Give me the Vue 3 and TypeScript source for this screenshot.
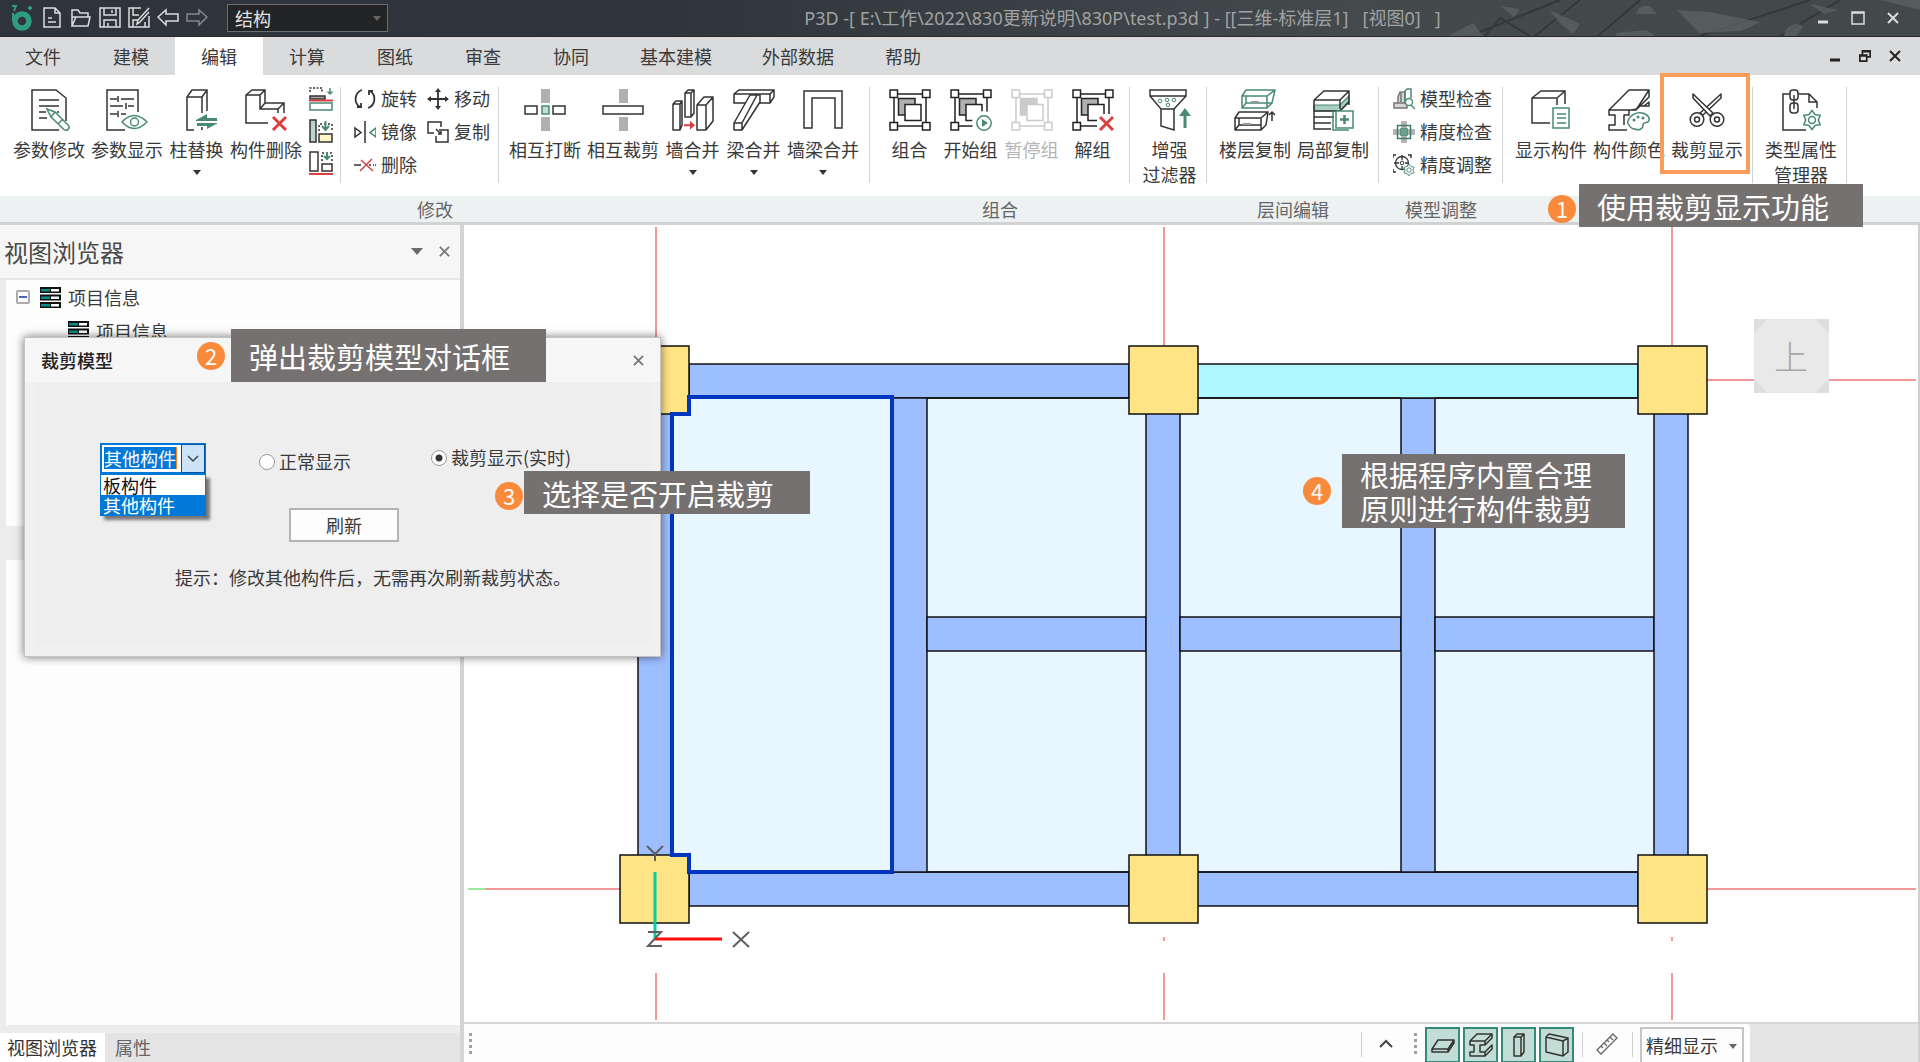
<script setup lang="ts">
import { ref } from 'vue'

interface Tool {
  icon: string
  label: string
  second?: string
  drop?: boolean
  disabled?: boolean
  marked?: boolean
}

interface Callout {
  id: number
  lines: string[]
}

const menus: string[] = ['文件', '建模', '编辑', '计算', '图纸', '审查', '协同', '基本建模', '外部数据', '帮助']
const activeMenu = ref('编辑')

const quick: { icon: string; title: string }[] = [
  { icon: 'new', title: '新建' },
  { icon: 'open', title: '打开' },
  { icon: 'save', title: '保存' },
  { icon: 'save-as', title: '另存为' },
  { icon: 'undo', title: '撤销' },
  { icon: 'redo', title: '重做' },
]

const memberTools: Tool[] = [
  { icon: 'param-edit', label: '参数修改' },
  { icon: 'param-show', label: '参数显示' },
  { icon: 'col-swap', label: '柱替换', drop: true },
  { icon: 'member-del', label: '构件删除' },
]
const alignTools: { icon: string; title: string }[] = [
  { icon: 'align-top', title: '顶对齐' },
  { icon: 'align-side', title: '侧对齐' },
  { icon: 'align-base', title: '底对齐' },
]
const moveTools: Tool[] = [
  { icon: 'rotate', label: '旋转' },
  { icon: 'move', label: '移动' },
  { icon: 'mirror', label: '镜像' },
  { icon: 'copy', label: '复制' },
  { icon: 'erase', label: '删除' },
]
const mergeTools: Tool[] = [
  { icon: 'break', label: '相互打断' },
  { icon: 'trim', label: '相互裁剪' },
  { icon: 'wall-merge', label: '墙合并', drop: true },
  { icon: 'beam-merge', label: '梁合并', drop: true },
  { icon: 'wb-merge', label: '墙梁合并', drop: true },
]
const groupTools: Tool[] = [
  { icon: 'group', label: '组合' },
  { icon: 'group-start', label: '开始组' },
  { icon: 'group-pause', label: '暂停组', disabled: true },
  { icon: 'ungroup', label: '解组' },
]
const filterTools: Tool[] = [{ icon: 'filter', label: '增强', second: '过滤器' }]
const floorTools: Tool[] = [
  { icon: 'floor-copy', label: '楼层复制' },
  { icon: 'part-copy', label: '局部复制' },
]
const checkTools: Tool[] = [
  { icon: 'model-check', label: '模型检查' },
  { icon: 'precision-check', label: '精度检查' },
  { icon: 'precision-set', label: '精度调整' },
]
const showTools: Tool[] = [
  { icon: 'member-show', label: '显示构件' },
  { icon: 'member-color', label: '构件颜色' },
  { icon: 'scissors', label: '裁剪显示', marked: true },
]
const typeTools: Tool[] = [{ icon: 'type-mgr', label: '类型属性', second: '管理器' }]

const bigGroups: { name: string; tools: Tool[] }[] = [
  { name: '组合', tools: groupTools },
  { name: '', tools: filterTools },
  { name: '层间编辑', tools: floorTools },
]
const lastGroups: { name: string; tools: Tool[] }[] = [
  { name: '', tools: showTools },
  { name: '', tools: typeTools },
]

const memberTypes: string[] = ['板构件', '其他构件']
const memberType = ref('其他构件')
const displayMode = ref('clip')

const callouts: Callout[] = [
  { id: 1, lines: ['使用裁剪显示功能'] },
  { id: 2, lines: ['弹出裁剪模型对话框'] },
  { id: 3, lines: ['选择是否开启裁剪'] },
  { id: 4, lines: ['根据程序内置合理', '原则进行构件裁剪'] },
]

const columns: [number, number][] = [
  [620, 346], [1129, 346], [1638, 346],
  [620, 855], [1129, 855], [1638, 855],
]

const viewToggles: { icon: string; title: string }[] = [
  { icon: 'v-slab', title: '板' },
  { icon: 'v-beam', title: '梁' },
  { icon: 'v-column', title: '柱' },
  { icon: 'v-wall', title: '墙' },
]
</script>

<template>
  <div class="app">
    <svg class="defs" aria-hidden="true">
      <defs>
        <g id="sq-frame" fill="none" stroke-width="1.5">
          <path d="M9 5h24M9 37h24M5 9v24M37 9v24" />
          <path d="M9.500 9.500h16.500v16.500H9.500z" fill="#b0b0b0" />
          <path d="M16 15.500h16v16H16z" fill="#fff" />
          <path d="M1 1h7.500v7.500H1zM33.500 1H41v7.500h-7.500zM1 33.500h7.500V41H1zM33.500 33.500H41V41h-7.500z" fill="#fff" />
        </g>
        <g id="gear" fill="#fff" stroke="#4a8a73" stroke-width="1.500">
          <path d="M0-9.500 3-5.500 8.200-4.700 6.300 0 8.200 4.700 3 5.500 0 9.500-3 5.500-8.200 4.700-6.300 0-8.200-4.700-3-5.500z" />
          <circle r="3.500" />
        </g>
      </defs>
      <symbol id="i-logo" viewBox="0 0 22 26"><circle cx="11" cy="16" r="7" fill="none" stroke="#2f9c82" stroke-width="5.500" /><path d="M2 8v8M17 3h4M19 1v4M1 1h4L3 6" stroke="#2f9c82" stroke-width="2" fill="none" /></symbol>
      <symbol id="i-new" viewBox="0 0 22 22"><path d="M3 1h11l5 5v14H3zM14 1v5h5M7 11h4M7 15h8" fill="none" stroke="#dcdcdc" stroke-width="1.500" /></symbol>
      <symbol id="i-open" viewBox="0 0 22 22"><path d="M2 19V3h6l2 3h8v4M2 19l4-9h14l-2 9zM2 10h4" fill="none" stroke="#dcdcdc" stroke-width="1.500" /></symbol>
      <symbol id="i-save" viewBox="0 0 22 22"><path d="M1 1h20v19H1zM5 1v7h12V1M13 3v3M5 20v-7h12v7M9 16v4" fill="none" stroke="#dcdcdc" stroke-width="1.500" /></symbol>
      <symbol id="i-save-as" viewBox="0 0 22 22"><path d="M13 1H1v19h20V9M5 1v7h6M5 20v-7h5M17 20v-5M21 1 10 13l-1 4 3-2L21 5" fill="none" stroke="#dcdcdc" stroke-width="1.500" /></symbol>
      <symbol id="i-undo" viewBox="0 0 22 22"><path d="M1 10 9 3v4h12v7H9v4z" fill="none" stroke="#dcdcdc" stroke-width="1.500" /></symbol>
      <symbol id="i-redo" viewBox="0 0 22 22"><path d="M21 10 13 3v4H1v7h12v4z" fill="none" stroke="#85888a" stroke-width="1.500" /></symbol>

      <symbol id="i-param-edit" viewBox="0 0 42 42"><g fill="none" stroke="#333" stroke-width="1.500"><path d="M31 41H4V1h24l10 8v23" /><path d="M11 11h20M11 17h20M11 23h7M11 29h8M29 23h2" /></g><path d="m19 20 8 3 13 13a3 3 0 0 1-4 4.500L23 28zM27 23l-4 5M34 31l-4 4" fill="#fff" stroke="#4a8a73" stroke-width="1.500" /></symbol>
      <symbol id="i-param-show" viewBox="0 0 42 42"><path d="M19 41H1V1h31v22M4 10h7M15 10h13M12 7v6M4 17h13M22 17h6M20 14v6M4 25h7M15 25h5M12 22v6" fill="none" stroke="#333" stroke-width="1.500" /><path d="M16 33q12-13 25 0q-13 13-25 0z" fill="#fff" stroke="#4a8a73" stroke-width="1.500" /><circle cx="28.500" cy="33" r="4" fill="none" stroke="#4a8a73" stroke-width="1.500" /></symbol>
      <symbol id="i-col-swap" viewBox="0 0 42 42"><path d="M18 41h-7V8L16 1h15v21M11 8h15v16M26 8l5-7M26 41v-3" fill="none" stroke="#333" stroke-width="1.500" /><path d="M20 31 31 25v4h10v3H20zM42 34 31 40v-3H21v-3z" fill="#4a8a73" /></symbol>
      <symbol id="i-member-del" viewBox="0 0 42 42"><path d="M23 34H1V6L7 1h13v13h19v10M1 6h14v14h18v4M15 6l5-5M15 20l5-6M33 20l6-6" fill="none" stroke="#333" stroke-width="1.500" /><path d="m28 28 13 13M41 28 28 41" stroke="#d9403f" stroke-width="3" /></symbol>
      <symbol id="i-align-top" viewBox="0 0 24 24"><path d="M1 5V1h12v4" fill="none" stroke="#333" stroke-width="1.500" stroke-dasharray="2 1.500" /><path d="M1 9h15v3H1z" fill="#aaa" stroke="#333" stroke-width="1.500" /><path d="M0 13.500h24" stroke="#d9403f" stroke-width="2" /><path d="M1 16h22v7H1z" fill="#fff" stroke="#4a8a73" stroke-width="1.500" /><path d="M21 1v6M18.500 4.500 21 7l2.500-2.500" fill="none" stroke="#4a8a73" stroke-width="1.500" /></symbol>
      <symbol id="i-align-side" viewBox="0 0 24 24"><path d="M1 1h6v22H1z" fill="#b9d6cb" stroke="#333" stroke-width="1.500" /><path d="M10 15h13v8H10z" fill="#fff6c8" stroke="#333" stroke-width="1.500" /><path d="M10 12V5h13v7" fill="none" stroke="#333" stroke-width="1.500" stroke-dasharray="2 2" /><path d="M16.500 2v8M13 7l3.500 4L20 7" fill="none" stroke="#4a8a73" stroke-width="2" /></symbol>
      <symbol id="i-align-base" viewBox="0 0 24 24"><path d="M1 1h8v19H1zM13 13h10v7H13z" fill="#fff" stroke="#333" stroke-width="1.500" /><path d="M13 10V2h10v8" fill="none" stroke="#333" stroke-width="1.500" stroke-dasharray="2 2" /><path d="M18 1v6M15 5l3 3 3-3" fill="none" stroke="#4a8a73" stroke-width="2" /><path d="M0 23h24" stroke="#d9403f" stroke-width="2" /></symbol>

      <symbol id="i-rotate" viewBox="0 0 22 22"><path d="M8 2a9.500 9.500 0 0 0-2 17M14 20a9.500 9.500 0 0 0 2-17M3 19h4v-4M19 3h-4v4" fill="none" stroke="#333" stroke-width="1.800" /></symbol>
      <symbol id="i-move" viewBox="0 0 22 22"><path d="M11 2v18M2 11h18" stroke="#333" stroke-width="1.800" /><path d="m11 0 3 4H8zM11 22l3-4H8zM0 11l4-3v6zM22 11l-4-3v6z" fill="#333" /></symbol>
      <symbol id="i-mirror" viewBox="0 0 22 22"><path d="M1 7v9l6-4.500zM11 0v22" fill="none" stroke="#333" stroke-width="1.500" /><path d="M22 7v9l-6-4.500z" fill="none" stroke="#4a8a73" stroke-width="1.500" /></symbol>
      <symbol id="i-copy" viewBox="0 0 22 22"><path d="M7 12H1V1h13v5M12 9h9v12H9v-6M9 8l5 5M14 10v3h-3" fill="none" stroke="#333" stroke-width="1.500" /></symbol>
      <symbol id="i-erase" viewBox="0 0 22 22"><path d="M0 11h7M15 11h2M19 11h1M21 11h1" stroke="#333" stroke-width="1.500" /><path d="m7 6 12 11M18 5 6 17" stroke="#d9403f" stroke-width="1.500" /></symbol>

      <symbol id="i-break" viewBox="0 0 42 42"><path d="M17 0h9v14h-9zM17 28h9v14h-9z" fill="#b0b0b0" /><path d="M1 17h12v8H1zM29 17h12v8H29z" fill="#fff" stroke="#333" stroke-width="1.500" /><path d="M18 17h7v8h-7z" fill="#c5ded5" stroke="#4a8a73" stroke-width="1.500" /></symbol>
      <symbol id="i-trim" viewBox="0 0 42 42"><path d="M17 0h9v14h-9zM17 28h9v14h-9z" fill="#b0b0b0" /><path d="M1 17h40v8H1z" fill="#fff" stroke="#333" stroke-width="1.500" /></symbol>
      <symbol id="i-wall-merge" viewBox="0 0 42 42"><path d="M1 15h7v26H1zM1 15l3-3h6v24l-2 5M8 15l2-3M13 4h6v24h-6zM13 4l3-3h6v23l-3 4M19 4l3-3M25 16h9v25h-9zM25 16l7-8h9v24l-7 9M34 16l7-8" fill="#fff" stroke="#333" stroke-width="1.500" stroke-linejoin="round" /><path d="M12 35.200h6v-3.500l5 4.500-5 4.500v-3.500h-6z" fill="#d9403f" /></symbol>
      <symbol id="i-beam-merge" viewBox="0 0 42 42"><path d="M1 5 6 1h35v7l-4 6H1zM1 5h36v9M37 5l4-4" fill="#fff" stroke="#333" stroke-width="1.500" /><path d="M1 34 17 6h7L9 34zM1 34h8v7H1zM9 41 27 13V6h-3L9 34" fill="#fff" stroke="#333" stroke-width="1.500" stroke-linejoin="round" /></symbol>
      <symbol id="i-wb-merge" viewBox="0 0 42 42"><path d="M2 2h38v37h-7V9H10v30H2z" fill="#fff" stroke="#333" stroke-width="1.500" /></symbol>
      <symbol id="i-group" viewBox="0 0 42 42"><use href="#sq-frame" stroke="#222" /></symbol>
      <symbol id="i-group-start" viewBox="0 0 42 42"><use href="#sq-frame" stroke="#222" /><circle cx="34" cy="34" r="12" fill="#fff" /><circle cx="34" cy="34" r="7.200" fill="none" stroke="#4a8a73" stroke-width="1.500" /><path d="m32 30 6 4-6 4z" fill="#4a8a73" /></symbol>
      <symbol id="i-group-pause" viewBox="0 0 42 42"><g opacity=".65"><use href="#sq-frame" stroke="#b0b0b0" /></g></symbol>
      <symbol id="i-ungroup" viewBox="0 0 42 42"><use href="#sq-frame" stroke="#222" /><path d="M25 25h17v17H25z" fill="#fff" /><path d="m28 28 13 13M41 28 28 41" stroke="#d9403f" stroke-width="3" /></symbol>
      <symbol id="i-filter" viewBox="0 0 42 42"><path d="M1 1h36v6L25 20v21l-13-4V20L1 7zM1 7h36M12 20h13" fill="#fff" stroke="#333" stroke-width="1.500" /><g fill="none" stroke="#4a8a73"><circle cx="11" cy="12" r="1.800" /><circle cx="18" cy="11" r="1.800" /><circle cx="25" cy="11" r="1.800" /><circle cx="19" cy="16" r="1.800" /></g><path d="M36 19l6 8h-4.500v12h-3V27H30z" fill="#4a8a73" /></symbol>
      <symbol id="i-floor-copy" viewBox="0 0 42 42"><path d="M8 7 12 1h29l-3 13-5 5H8zM8 7h25v12M33 7l8-6M12 7v7l-4 5M12 14h26" fill="#fff" stroke="#4a8a73" stroke-width="1.500" stroke-linejoin="round" /><path d="M1 29 5 23h29l-2 13-5 5H1zM1 29h26v12M27 29l7-6M5 29v7l-4 5M5 36h22" fill="#fff" stroke="#333" stroke-width="1.500" stroke-linejoin="round" /><path d="M17 13h8M9 35h8" stroke="#999" stroke-width="2" /><path d="M38 32V23M35 26l3-3 3 3" fill="none" stroke="#333" stroke-width="1.500" /></symbol>
      <symbol id="i-part-copy" viewBox="0 0 42 42"><path d="M2 16h26l9-9v5l-9 10H2z" fill="#a9cdbf" stroke="#4a8a73" stroke-width="1.200" /><path d="M2 11 12 2h25v14M2 11h26l9-9M2 11v29h17M2 22h26l9-9M2 28h20M2 34h17M28 11v9" fill="none" stroke="#333" stroke-width="1.500" /><path d="M21 22v19h16" fill="none" stroke="#4a8a73" stroke-width="1.500" /><path d="M24 22h17v17H24z" fill="#fff" stroke="#4a8a73" stroke-width="1.500" /><path d="M32.500 26v9M28 30.500h9" stroke="#4a8a73" stroke-width="2.500" /></symbol>
      <symbol id="i-model-check" viewBox="0 0 22 22"><path d="M1 15h4V9l2-5h5v11l2 2v3H1zM5 15h8M8 5v9" fill="#d5d5d5" stroke="#777" stroke-width="1.500" /><path d="M12 15V3l2-2h4v9" fill="none" stroke="#4a8a73" stroke-width="1.500" /><circle cx="16" cy="14" r="3.500" fill="#fff" stroke="#4a8a73" stroke-width="1.300" /><path d="m18 17 4 4" stroke="#4a8a73" stroke-width="1.500" /></symbol>
      <symbol id="i-precision-check" viewBox="0 0 22 22"><path d="M8 0h6v22H8zM0 8h22v6H0z" fill="#b4b4b4" /><path d="M4.500 4.500h13v13h-13zM8 8h6v6H8z" fill="none" stroke="#3f806a" stroke-width="1.500" /><path d="M8 8h6v6H8z" fill="#6ba08e" /></symbol>
      <symbol id="i-precision-set" viewBox="0 0 22 22"><path d="M0 4V1h3M15 1h3v3M0 15v3h3" fill="none" stroke="#333" stroke-width="1.500" /><circle cx="9" cy="9" r="6.500" fill="none" stroke="#333" stroke-width="1.300" /><circle cx="9" cy="9" r="1.800" fill="none" stroke="#333" /><path d="M9 1v5M9 12v4M1 9h5M12 9h4" stroke="#333" stroke-width="1.300" /><use href="#gear" transform="translate(16 16) scale(.62)" /></symbol>
      <symbol id="i-member-show" viewBox="0 0 42 42"><path d="M20 34H2V9l9-7h24v13M2 9h25v7M27 9l8-7" fill="none" stroke="#333" stroke-width="1.500" /><path d="M23 19h16v20H23z" fill="#fff" stroke="#4a8a73" stroke-width="1.500" /><path d="M27 25h9M27 29h9M27 34h9" stroke="#4a8a73" stroke-width="1.500" /></symbol>
      <symbol id="i-member-color" viewBox="0 0 42 42"><path d="M19 41H1v-5h6V26H1v-5L21 1h20v7L29 20l-6 1M1 21h27L41 1M21 21v5h-5v10M33 17h8v-4l-5 4" fill="none" stroke="#333" stroke-width="1.500" stroke-linejoin="round" /><path d="M20 32c2-6 8-9 14-8s9 6 6 9c-2 1-5 0-5 3 0 4-4 6-8 4-3 0-5-2-6-4-1-1-2-2-1-4z" fill="#fff" stroke="#4a8a73" stroke-width="1.500" /><g fill="#4a8a73"><circle cx="26" cy="31" r="1.500" /><circle cx="30" cy="28" r="1.500" /><circle cx="35" cy="29" r="1.500" /></g></symbol>
      <symbol id="i-scissors" viewBox="0 0 42 42"><g fill="#fff" stroke="#333" stroke-width="1.500" stroke-linejoin="round"><path d="M35 5v4L17 26l-3-2z" /><path d="M7 5v4l17 18 3-3z" /><circle cx="11" cy="30.500" r="6.800" /><circle cx="31" cy="30.500" r="6.800" /><circle cx="11" cy="30.500" r="2.500" /><circle cx="31" cy="30.500" r="2.500" /></g></symbol>
      <symbol id="i-type-mgr" viewBox="0 0 42 42"><path d="M26 41H3V5h7M18 5h11l8 8v6M29 5v8h8" fill="none" stroke="#333" stroke-width="1.500" /><rect x="10" y="1" width="8" height="10" rx="3" fill="none" stroke="#333" stroke-width="1.500" /><rect x="10" y="14" width="8" height="10" rx="3" fill="none" stroke="#333" stroke-width="1.500" /><path d="M14 6v14" stroke="#333" stroke-width="1.500" /><use href="#gear" transform="translate(32 31)" /></symbol>

      <symbol id="i-tree" viewBox="0 0 21 21"><path d="M0 0h21v6H0zM0 7.500h21v6H0zM0 15h21v6H0z" fill="#111" /><path d="M1 2h9v2.500H1zM1 9.500h9V12H1zM1 17h9v2.500H1z" fill="#00908a" /><path d="M11 2h8v2.500h-8zM11 9.500h8V12h-8zM11 17h8v2.500h-8z" fill="#fff" /></symbol>
      <symbol id="i-v-slab" viewBox="0 0 26 26"><path d="M2 17 8 8h16l-6 9zM2 17v3h16l6-9V8M18 17v3" fill="none" stroke="#333" stroke-width="1.500" stroke-linejoin="round" /></symbol>
      <symbol id="i-v-beam" viewBox="0 0 26 26"><path d="M2 9 9 2h15l-7 7zM2 9v4h4v7H2v4h15l7-7v-4l-7 7h-5v-7h5l7-7V2M17 9v4M17 20v4" fill="none" stroke="#333" stroke-width="1.500" stroke-linejoin="round" /></symbol>
      <symbol id="i-v-column" viewBox="0 0 26 26"><path d="M8 5h7v19H8zM8 5l3-3h7v18l-3 4M15 5l3-3" fill="none" stroke="#333" stroke-width="1.500" stroke-linejoin="round" /></symbol>
      <symbol id="i-v-wall" viewBox="0 0 26 26"><path d="M2 5l17 4v15L2 20zM2 5l3-3 19 4v14l-5 4M19 9l5-3" fill="none" stroke="#333" stroke-width="1.500" stroke-linejoin="round" /></symbol>
      <symbol id="i-ruler" viewBox="0 0 24 24"><path d="M2 18 18 2l4 4L6 22zM6 14l2 2M9 11l3 3M12 8l2 2M15 5l3 3" fill="none" stroke="#666" stroke-width="1.300" /></symbol>
      <symbol id="i-x" viewBox="0 0 12 12"><path d="m1 1 10 10M11 1 1 11" fill="none" stroke="currentColor" stroke-width="2" /></symbol>
      <symbol id="i-min" viewBox="0 0 12 12"><path d="M1 10h10" stroke="currentColor" stroke-width="3" /></symbol>
      <symbol id="i-max" viewBox="0 0 14 14"><path d="M1 1h12v12H1zM1 2h12" fill="none" stroke="currentColor" stroke-width="1.500" /></symbol>
      <symbol id="i-restore" viewBox="0 0 14 14"><path d="M4 5V1h9v7h-3M1 6h8v7H1zM1 7h8M4 2h9" fill="none" stroke="currentColor" stroke-width="2" /></symbol>
    </svg>

    <header class="titlebar">
      <svg class="backdrop" viewBox="0 0 600 36" preserveAspectRatio="xMaxYMid slice" aria-hidden="true">
        <path d="M150 36 240 0M165 36 180 18 210 36M215 36 260 0M278 36 320 0M380 36 490 0M460 36 520 0" stroke="#34383b" stroke-width="2" fill="none" />
        <path d="M316 14q2-10 14-8l7 8zM357 10l32 2 52 10-20 9-42 2zM465 31q10-12 18-4l-7 9h-12zM230 10l30 14-7 10-16-14zM128 36l25-13 10 13zM510 0h50l40 10V0zM180 6l20 3-6 8zM296 33l30-3 10 6h-40zM490 4l28 6-14 4z" fill="#5c6164" opacity=".75" />
      </svg>
      <svg class="logo"><use href="#i-logo" /></svg>
      <nav class="quick">
        <button v-for="q in quick" :key="q.icon" type="button" :aria-label="q.title"><svg><use :href="'#i-' + q.icon" /></svg></button>
      </nav>
      <span class="discipline caret"><select aria-label="专业"><option>结构</option></select></span>
      <h1>P3D -[ E:\工作\2022\830更新说明\830P\test.p3d ] - [[三维-标准层1]&nbsp;&nbsp; [视图0]&nbsp;&nbsp; ]</h1>
      <div class="winctl">
        <button type="button" aria-label="最小化"><svg><use href="#i-min" /></svg></button>
        <button type="button" aria-label="最大化"><svg class="mx"><use href="#i-max" /></svg></button>
        <button type="button" aria-label="关闭"><svg><use href="#i-x" /></svg></button>
      </div>
    </header>

    <nav class="menubar">
      <button v-for="m in menus" :key="m" type="button" :class="{ active: m === activeMenu }" @click="activeMenu = m">{{ m }}</button>
      <div class="winctl dark">
        <button type="button" aria-label="最小化视图"><svg><use href="#i-min" /></svg></button>
        <button type="button" aria-label="还原视图"><svg><use href="#i-restore" /></svg></button>
        <button type="button" aria-label="关闭视图"><svg><use href="#i-x" /></svg></button>
      </div>
    </nav>

    <section class="ribbon">
      <div class="group modify">
        <div class="tools">
          <div class="part">
            <button v-for="t in memberTools" :key="t.icon" class="big" type="button">
              <svg><use :href="'#i-' + t.icon" /></svg><span>{{ t.label }}</span><i v-if="t.drop" class="drop"></i>
            </button>
            <div class="stack">
              <button v-for="a in alignTools" :key="a.icon" type="button" :aria-label="a.title"><svg><use :href="'#i-' + a.icon" /></svg></button>
            </div>
          </div>
          <div class="part small two">
            <button v-for="t in moveTools" :key="t.icon" type="button"><svg><use :href="'#i-' + t.icon" /></svg>{{ t.label }}</button>
          </div>
          <div class="part">
            <button v-for="t in mergeTools" :key="t.icon" class="big" type="button">
              <svg><use :href="'#i-' + t.icon" /></svg><span>{{ t.label }}</span><i v-if="t.drop" class="drop"></i>
            </button>
          </div>
        </div>
        <div class="caption">修改</div>
      </div>
      <div v-for="(g, i) in bigGroups" :key="i" class="group">
        <div class="tools">
          <div class="part">
            <button v-for="t in g.tools" :key="t.icon" class="big" type="button" :disabled="t.disabled">
              <svg><use :href="'#i-' + t.icon" /></svg><span>{{ t.label }}</span><span v-if="t.second">{{ t.second }}</span>
            </button>
          </div>
        </div>
        <div class="caption">{{ g.name }}</div>
      </div>
      <div class="group">
        <div class="tools">
          <div class="part small">
            <button v-for="t in checkTools" :key="t.icon" type="button"><svg><use :href="'#i-' + t.icon" /></svg>{{ t.label }}</button>
          </div>
        </div>
        <div class="caption">模型调整</div>
      </div>
      <div v-for="(g, i) in lastGroups" :key="'l' + i" class="group">
        <div class="tools">
          <div class="part">
            <button v-for="t in g.tools" :key="t.icon" class="big" type="button" :class="{ marked: t.marked }">
              <svg><use :href="'#i-' + t.icon" /></svg><span>{{ t.label }}</span><span v-if="t.second">{{ t.second }}</span>
            </button>
          </div>
        </div>
        <div class="caption">{{ g.name }}</div>
      </div>
      <div class="group rest"><div class="caption"></div></div>
    </section>

    <main class="workspace">
      <aside class="side">
        <div class="side-head">
          <h2>视图浏览器</h2>
          <button type="button" aria-label="面板菜单"><i class="tri"></i></button>
          <button type="button" aria-label="关闭面板"><svg><use href="#i-x" /></svg></button>
        </div>
        <ul class="tree">
          <li><span class="toggle"></span><svg><use href="#i-tree" /></svg>项目信息</li>
          <li class="child"><svg><use href="#i-tree" /></svg>项目信息</li>
          <li class="selected"></li>
        </ul>
        <div class="side-tabs">
          <button type="button" class="on">视图浏览器</button>
          <button type="button">属性</button>
        </div>
      </aside>

      <section class="view">
        <svg class="plan" viewBox="464 225 1454 797" preserveAspectRatio="xMinYMin slice">
          <g stroke="#ef7676" stroke-width="1.500" fill="none">
            <path d="M656 227V1020M1164 227V346M1672 227V346M1706 380H1916M485 889H620M1706 889H1916M1164 973V1020M1672 973V1020M1164 937v4M1672 937v4" />
            <path d="M468 889h18" stroke="#7be07b" />
          </g>
          <rect x="646" y="923" width="24" height="50" fill="#fff" />
          <rect x="672" y="398" width="982" height="474" fill="#e8f6ff" />
          <g fill="#9dbeff" stroke="#111" stroke-width="1.500">
            <rect x="689" y="364" width="440" height="34" />
            <rect x="689" y="872" width="440" height="34" />
            <rect x="1197" y="872" width="441" height="34" />
            <rect x="638" y="413" width="34" height="443" />
            <rect x="892" y="398" width="35" height="474" />
            <rect x="927" y="617" width="219" height="34" />
            <rect x="1146" y="413" width="34" height="443" />
            <rect x="1180" y="617" width="221" height="34" />
            <rect x="1401" y="398" width="34" height="474" />
            <rect x="1435" y="617" width="219" height="34" />
            <rect x="1654" y="413" width="34" height="443" />
            <rect x="1197" y="364" width="441" height="34" fill="#b0f7ff" />
            <path d="M927 398H1146M1180 398H1401M1435 398H1654M927 872H1146M1180 872H1401M1435 872H1654" />
          </g>
          <rect v-for="([cx, cy], i) in columns" :key="i" :x="cx" :y="cy" width="69" height="68" fill="#ffe485" stroke="#111" stroke-width="1.500" />
          <path d="M689 397H892V872H689V855H672V414H689z" fill="#e8f6ff" stroke="#0035bf" stroke-width="4" />
          <path d="M655 872V938" stroke="#00d1a0" stroke-width="3" />
          <path d="M655 939H722" stroke="#ff0d0d" stroke-width="3" />
          <path d="m647 846 8 8 8-8M655 854v7M648 932h13l-13 14h14M733 932l16 15M749 932l-16 15" fill="none" stroke="#5f5f5f" stroke-width="2" />
          <g>
            <rect x="1754" y="319" width="75" height="74" fill="#e9e9e9" />
            <path d="M1754 319h14l-14 14zM1829 319h-14l14 14zM1754 393h14l-14-14zM1829 393h-14l14-14z" fill="#dedede" />
            <text x="1791" y="370" text-anchor="middle" class="face">上</text>
          </g>
        </svg>
        <div class="statusbar">
          <div class="toolbar">
            <i class="dots"></i>
            <span class="fill"></span>
            <i class="bar"></i>
            <button type="button" class="flat" aria-label="展开"><svg viewBox="0 0 14 10"><path d="m1 8 6-6 6 6" fill="none" stroke="#444" stroke-width="2" /></svg></button>
            <i class="dots"></i>
            <button v-for="v in viewToggles" :key="v.icon" type="button" class="vt" :aria-label="v.title"><svg><use :href="'#i-' + v.icon" /></svg></button>
            <i class="bar"></i>
            <button type="button" class="flat ruler" aria-label="测量"><svg><use href="#i-ruler" /></svg></button>
            <i class="bar"></i>
            <span class="detail caret"><select aria-label="显示精度"><option>精细显示</option></select></span>
          </div>
        </div>
      </section>

      <form class="dialog" @submit.prevent>
        <header>
          <h3>裁剪模型</h3>
          <button type="button" aria-label="关闭"><svg><use href="#i-x" /></svg></button>
        </header>
        <div class="panel">
          <div class="row">
            <div class="combo">
              <div class="field">
                <input v-model="memberType" role="combobox" aria-label="构件类型" aria-expanded="true" aria-controls="member-list" />
                <button type="button" aria-label="展开列表"><svg viewBox="0 0 12 8"><path d="m1 1 5 5 5-5" fill="none" stroke="#444" stroke-width="1.500" /></svg></button>
              </div>
              <ul id="member-list" role="listbox">
                <li v-for="m in memberTypes" :key="m" role="option" :aria-selected="m === memberType" :class="{ on: m === memberType }" @click="memberType = m">{{ m }}</li>
              </ul>
            </div>
            <label class="normal"><input v-model="displayMode" type="radio" name="mode" value="normal" />正常显示</label>
            <label><input v-model="displayMode" type="radio" name="mode" value="clip" />裁剪显示(实时)</label>
          </div>
          <button type="submit" class="refresh">刷新</button>
          <p>提示：修改其他构件后，无需再次刷新裁剪状态。</p>
        </div>
      </form>
    </main>

    <div v-for="c in callouts" :key="c.id" class="callout" :class="'c' + c.id">
      <b>{{ c.id }}</b>
      <p><span v-for="l in c.lines" :key="l">{{ l }}</span></p>
    </div>
  </div>
</template>

<style>
body {
  background: #fff;
}
</style>

<style scoped>
* {
  box-sizing: border-box;
}
.app {
  position: relative;
  display: flex;
  flex-direction: column;
  height: 100vh;
  overflow: hidden;
  font-family: "Noto Sans CJK SC", "Noto Sans", sans-serif;
  font-size: 18px;
  line-height: 25px;
  color: #3a3a3a;
}
.defs {
  position: absolute;
  width: 0;
  height: 0;
}
button,
select,
input {
  margin: 0;
  padding: 0;
  border: 0;
  background: none;
  font: inherit;
  color: inherit;
  appearance: none;
}
h1, h2, h3, p, ul {
  margin: 0;
  padding: 0;
  font-weight: 400;
  list-style: none;
}
svg {
  display: block;
}

/* title bar */
.titlebar {
  position: relative;
  display: flex;
  align-items: center;
  height: 37px;
  flex: none;
  padding-left: 11px;
  background: linear-gradient(90deg, #2e3439, #2f353a 35%, #44494c 70%, #43484b);
  border-bottom: 1px solid #24282b;
}
.backdrop {
  position: absolute;
  right: 0;
  top: 0;
  width: 600px;
  height: 36px;
}
.logo {
  width: 22px;
  height: 26px;
}
.quick {
  display: flex;
  gap: 7px;
  margin-left: 8px;
}
.quick svg {
  width: 22px;
  height: 22px;
}
.caret {
  position: relative;
  display: flex;
}
.caret::after {
  content: "";
  position: absolute;
  right: 7px;
  top: 50%;
  margin-top: -2px;
  border: 4px solid transparent;
  border-top: 5px solid #666;
  border-bottom: 0;
  pointer-events: none;
}
.discipline {
  margin-left: 19px;
}
.discipline select {
  width: 161px;
  height: 28px;
  padding-left: 7px;
  background: #232426;
  border: 1px solid #6b6e70;
  color: #e2e2e2;
}
.titlebar h1 {
  position: relative;
  flex: 1;
  padding-left: 40px;
  text-align: center;
  white-space: pre;
  font-family: "Noto Sans", "Noto Sans CJK SC", sans-serif;
  font-size: 18px;
  color: #a0a2a3;
}
.winctl {
  position: relative;
  display: flex;
  align-items: center;
  gap: 22px;
  margin-left: auto;
  padding-right: 21px;
  color: #dcdcdc;
}
.winctl svg {
  width: 12px;
  height: 12px;
}
.winctl .mx {
  width: 14px;
  height: 14px;
}
.winctl.dark {
  gap: 18px;
  padding-right: 19px;
  color: #222;
}

/* menu tabs */
.menubar {
  display: flex;
  height: 38px;
  flex: none;
  background: #d9dbdd;
}
.menubar > button {
  min-width: 88px;
  padding: 0 25px;
  white-space: nowrap;
}
.menubar > button:first-child {
  margin-left: -1px;
}
.menubar > .active {
  background: #fff;
}

/* ribbon */
.ribbon {
  display: flex;
  flex: none;
  background: #fff;
  border-bottom: 3px solid #d0d2d3;
}
.group {
  display: flex;
  flex-direction: column;
}
.group.rest {
  flex: 1;
  justify-content: flex-end;
}
.tools {
  display: flex;
  height: 121px;
}
.part {
  position: relative;
  display: flex;
  padding: 14px 7px 0 9px;
}
.part::after {
  content: "";
  position: absolute;
  right: 0;
  top: 12px;
  width: 1px;
  height: 96px;
  background: #cfd1d2;
}
.modify .part {
  padding-left: 7px;
  padding-right: 8px;
}
.modify .part:first-child {
  padding-left: 10px;
}
.caption {
  height: 26px;
  background: #edf1f2;
  text-align: center;
  line-height: 26px;
  color: #666;
}
.big {
  position: relative;
  display: flex;
  flex-direction: column;
  align-items: center;
  min-width: 61px;
  padding: 0 3px;
  align-self: flex-start;
  white-space: nowrap;
}
.big svg {
  width: 42px;
  height: 42px;
  margin-bottom: 6px;
}
.big:disabled {
  color: #b4b4b4;
}
.drop {
  margin-top: 8px;
  border: 4px solid transparent;
  border-top: 5px solid #333;
  border-bottom: 0;
}
.marked::before {
  content: "";
  position: absolute;
  left: -8px;
  right: -4px;
  top: -16px;
  height: 93px;
  border: 4px solid #fa9c5b;
}
.stack {
  display: flex;
  flex-direction: column;
  gap: 8px;
  margin: -2px 0 0 4px;
}
.stack svg {
  width: 24px;
  height: 24px;
}
.small {
  display: grid;
  grid-auto-rows: 33px;
  padding: 7px 11px 0 14px;
}
.modify .small {
  padding: 7px 9px 0 13px;
}
.small.two {
  grid-template-columns: auto auto;
  column-gap: 10px;
}
.small button {
  display: flex;
  align-items: center;
  gap: 5px;
  white-space: nowrap;
}
.small svg {
  width: 22px;
  height: 22px;
}

/* workspace */
.workspace {
  position: relative;
  display: flex;
  flex: 1;
  min-height: 0;
}
.side {
  display: flex;
  flex-direction: column;
  width: 464px;
  flex: none;
  background: #ececec;
  border-right: 4px solid #d3d4d5;
}
.side-head {
  display: flex;
  align-items: center;
  height: 55px;
  padding: 0 10px 0 4px;
  background: #f6f6f6;
  border-bottom: 2px solid #e6e6e6;
}
.side-head h2 {
  flex: 1;
  font-size: 24px;
  line-height: 32px;
  color: #4a4a4a;
}
.side-head button {
  margin-left: 16px;
  color: #777;
}
.side-head svg {
  width: 11px;
  height: 11px;
}
.tri {
  display: block;
  border: 6px solid transparent;
  border-top: 7px solid #6b6b6b;
  border-bottom: 0;
}
.tree {
  flex: 1;
  margin-left: 6px;
  background: #fdfdfd;
}
.tree li {
  display: flex;
  align-items: center;
  height: 34px;
  padding-left: 10px;
  gap: 7px;
}
.tree svg {
  width: 21px;
  height: 21px;
}
.tree .child {
  padding-left: 62px;
}
.tree .selected {
  margin-top: 178px;
  background: #ededed;
}
.toggle {
  position: relative;
  width: 14px;
  height: 14px;
  margin-right: 3px;
  border: 2px solid #ababab;
  border-radius: 2px;
}
.toggle::after {
  content: "";
  position: absolute;
  left: 1px;
  right: 1px;
  top: 4px;
  height: 2px;
  background: #4a62b8;
}
.side-tabs {
  display: flex;
  height: 29px;
  margin-top: 8px;
  background: #e4e4e4;
}
.side-tabs button {
  padding: 0 10px;
  color: #666;
}
.side-tabs .on {
  padding: 0 8px 0 7px;
  background: #fff;
  color: #333;
}
.view {
  display: flex;
  flex-direction: column;
  flex: 1;
  min-width: 0;
  border-right: 2px solid #cfcfcf;
}
.plan {
  flex: 1;
  min-height: 0;
  width: 100%;
  background: #fff;
}
.face {
  font-size: 34px;
  font-weight: 300;
  fill: #a8a8a8;
}
.statusbar {
  display: flex;
  height: 40px;
  flex: none;
  background: #e5e5e5;
  border-top: 2px solid #d6d6d6;
}
.toolbar {
  display: flex;
  align-items: flex-start;
  width: 1286px;
  padding: 3px 6px 0 5px;
  background: #fdfdfd;
  border-radius: 0 4px 0 0;
}
.fill {
  flex: 1;
}
.dots {
  width: 3px;
  height: 22px;
  margin-top: 6px;
  background: repeating-linear-gradient(#a0a0a0 0 3px, transparent 3px 6px);
}
.bar {
  width: 1px;
  height: 25px;
  margin-top: 5px;
  background: #cfcfcf;
}
.flat {
  display: flex;
  align-items: center;
  height: 34px;
  margin: 0 21px 0 17px;
}
.flat svg {
  width: 14px;
  height: 10px;
}
.flat.ruler {
  margin: 0 13px 0 12px;
}
.flat.ruler svg {
  width: 24px;
  height: 24px;
}
.vt {
  display: flex;
  justify-content: center;
  width: 35px;
  height: 36px;
  margin-right: 3px;
  padding-top: 3px;
  background: #c2ddd6;
  border: 2px solid #348a78;
}
.dots + .vt {
  margin-left: 8px;
}
.vt + .bar {
  margin-left: 5px;
}
.vt svg {
  width: 26px;
  height: 26px;
}
.detail {
  margin-left: 7px;
}
.detail select {
  width: 104px;
  height: 37px;
  padding: 0 0 0 4px;
  border: 2px solid #c6c6c6;
}

/* dialog */
.dialog {
  position: absolute;
  left: 24px;
  top: 112px;
  width: 637px;
  height: 320px;
  background: #f0f0f0;
  border: 1px solid #c4c4c4;
  box-shadow: 0 0 9px rgba(0, 0, 0, 0.55);
}
.dialog header {
  display: flex;
  align-items: center;
  justify-content: space-between;
  height: 44px;
  padding: 0 16px;
  background: #f6f6f6;
}
.dialog h3 {
  font-size: 18px;
  font-weight: 500;
  color: #222;
}
.dialog header button {
  color: #777;
}
.dialog header svg {
  width: 11px;
  height: 11px;
}
.panel {
  display: flex;
  flex-direction: column;
  height: 264px;
  margin: 0 10px;
  padding: 61px 0 0 65px;
  background: #eee;
}
.row {
  display: flex;
  align-items: flex-start;
}
.combo {
  position: relative;
  width: 106px;
  margin-right: 53px;
}
.field {
  display: flex;
  height: 31px;
  background: #fff;
  border: 2px solid #0078d7;
}
.field input {
  width: 73px;
  height: 22px;
  margin: 2px auto 0 2px;
  background: #0078d7;
  color: #fff;
  border-right: 1px solid #f0861e;
}
.field button {
  display: flex;
  align-items: center;
  justify-content: center;
  width: 24px;
  margin: -1px;
  background: #cce4f7;
  border: 1px solid #005499;
}
.field svg {
  width: 12px;
  height: 8px;
}
.combo ul {
  position: absolute;
  left: 0;
  top: 31px;
  width: 106px;
  background: #fff;
  border: 1px solid #0078d7;
  box-shadow: 4px 4px 3px rgba(0, 0, 0, 0.5);
}
.combo li {
  height: 20px;
  padding-left: 2px;
  line-height: 20px;
  color: #111;
}
.combo .on {
  background: #0078d7;
  color: #fff;
}
.row label {
  display: flex;
  align-items: center;
  gap: 4px;
  margin-top: 2px;
  white-space: nowrap;
}
.row .normal {
  margin: 6px 80px 0 0;
}
.row input[type="radio"] {
  width: 16px;
  height: 16px;
  border: 1px solid #999;
  border-radius: 50%;
  background: #fff;
}
.row input[type="radio"]:checked {
  background: radial-gradient(#333 0 3px, #fff 4px);
}
.refresh {
  width: 110px;
  height: 34px;
  margin: 34px 0 0 189px;
  background: #fdfdfd;
  border: 2px solid #b4b4b4;
  line-height: 26px;
}
.panel p {
  margin: 23px 0 0 75px;
  white-space: nowrap;
}

/* numbered notes */
.callout {
  position: absolute;
  display: flex;
  align-items: center;
  gap: 3px;
}
.callout b {
  width: 28px;
  height: 28px;
  border-radius: 50%;
  background: #f98a3c;
  color: #fff;
  font-size: 22px;
  font-weight: 400;
  line-height: 27px;
  text-align: center;
}
.callout p {
  display: flex;
  flex-direction: column;
  justify-content: center;
  height: 43px;
  padding: 0 34px 0 18px;
  background: #757170;
  color: #fff;
  font-size: 29px;
  line-height: 34px;
  white-space: nowrap;
}
.c1 { left: 1548px; top: 184px; }
.c2 { left: 197px; top: 329px; gap: 6px; }
.c2 p { height: 53px; padding-right: 36px; }
.c3 { left: 495px; top: 471px; gap: 1px; }
.c3 p { padding-right: 36px; }
.c1 b, .c3 b { margin-top: 7px; }
.c4 { left: 1303px; top: 454px; gap: 11px; }
.c4 p { height: 74px; padding-right: 33px; }
</style>
